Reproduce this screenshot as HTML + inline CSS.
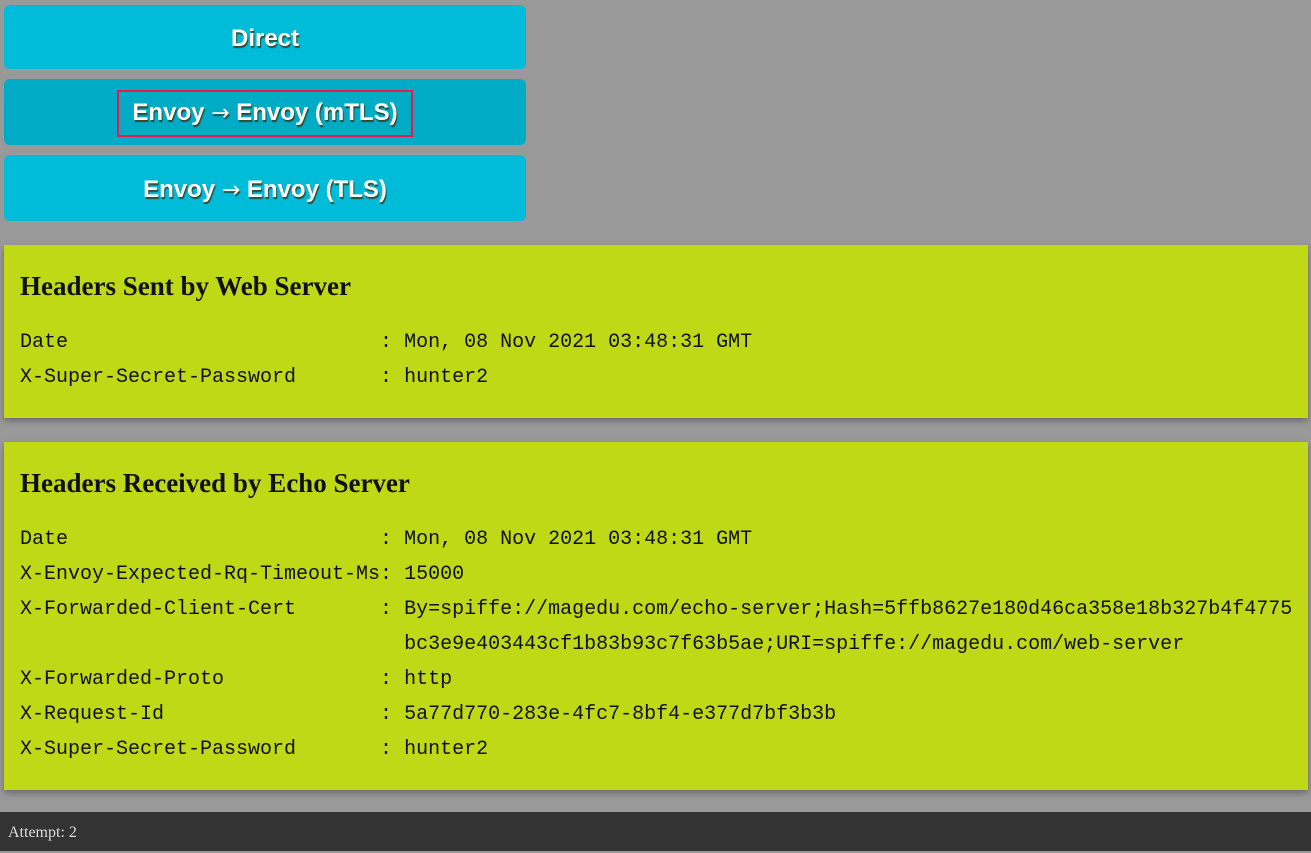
<!DOCTYPE html>
<html><head><meta charset="utf-8"><style>
html,body{margin:0;padding:0}
body{width:1311px;height:851px;background:#999999;position:relative;overflow:hidden;font-family:"Liberation Sans","DejaVu Sans",sans-serif}
.btn{position:absolute;left:4px;width:522px;border-radius:6px;background:#00bcd9;color:#fff;font-weight:bold;font-size:24px;display:flex;align-items:center;justify-content:center;text-shadow:1px 2px 1px rgba(60,40,0,.75);font-family:"Liberation Sans","DejaVu Sans",sans-serif;padding-top:3px;box-sizing:border-box}
.btn.act{background:#00abc6}
.btn.act span.b{border:2px solid #e8194b;padding:7px 13px 8px}
.ar{font-family:"DejaVu Sans",sans-serif;font-weight:normal;font-size:22px}
.panel{position:absolute;left:4px;width:1304px;background:#bfd916;box-shadow:0 3px 6px rgba(0,0,0,.3)}
h2{margin:0;position:absolute;left:16px;font-family:"Liberation Serif","DejaVu Serif",serif;font-size:27px;font-weight:bold;color:#111}
pre{margin:0;position:absolute;left:16px;font-family:"Liberation Mono","DejaVu Sans Mono",monospace;font-size:20px;line-height:35px;color:#111}
.foot{position:absolute;left:0;top:812px;width:1311px;height:39px;background:#333;color:#ddd;font-family:"Liberation Serif",serif;font-size:16px;line-height:41px;padding-left:8px;box-sizing:border-box}
</style></head><body>
<div class="btn" style="top:5px;height:64px">Direct</div>
<div class="btn act" style="top:79px;height:66px"><span class="b">Envoy <span class="ar">→</span> Envoy (mTLS)</span></div>
<div class="btn" style="top:155px;height:66px"><span>Envoy <span class="ar">→</span> Envoy (TLS)</span></div>
<div class="panel" style="top:245px;height:173px">
<h2 style="top:26px">Headers Sent by Web Server</h2>
<pre style="top:80px">Date                          : Mon, 08 Nov 2021 03:48:31 GMT
X-Super-Secret-Password       : hunter2</pre>
</div>
<div class="panel" style="top:442px;height:348px">
<h2 style="top:26px">Headers Received by Echo Server</h2>
<pre style="top:80px">Date                          : Mon, 08 Nov 2021 03:48:31 GMT
X-Envoy-Expected-Rq-Timeout-Ms: 15000
X-Forwarded-Client-Cert       : By=spiffe://magedu.com/echo-server;Hash=5ffb8627e180d46ca358e18b327b4f4775
                                bc3e9e403443cf1b83b93c7f63b5ae;URI=spiffe://magedu.com/web-server
X-Forwarded-Proto             : http
X-Request-Id                  : 5a77d770-283e-4fc7-8bf4-e377d7bf3b3b
X-Super-Secret-Password       : hunter2</pre>
</div>
<div class="foot">Attempt: 2</div>
</body></html>
